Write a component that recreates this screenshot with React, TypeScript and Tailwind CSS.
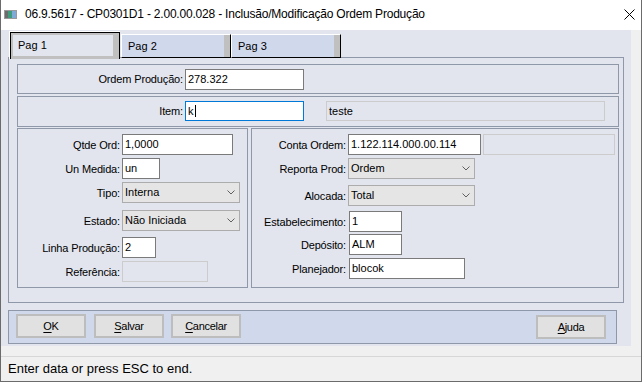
import React from "react";

const FONT = "font-['Liberation_Sans',Arial,sans-serif]";

function Label({ className, children }: { className: string; children: React.ReactNode }) {
  return (
    <div className={`shrink-0 text-right text-[11px] leading-[14px] tracking-[-0.15px] text-black ${className}`}>
      {children}
    </div>
  );
}

function Field({
  className,
  value,
  focused,
  h = "h-[21px]",
}: {
  className: string;
  value?: string;
  focused?: boolean;
  h?: string;
}) {
  return (
    <div
      className={`${h} shrink-0 border bg-white flex items-center pl-[2px] text-[11px] text-black ${
        focused ? "border-[#0078d7]" : "border-[#7a7a7a]"
      } ${className}`}
    >
      {value}
      {focused && <span className="ml-[1px] inline-block w-[1px] h-[12px] bg-black" />}
    </div>
  );
}

function Disabled({ className, value, h = "h-[21px]" }: { className: string; value?: string; h?: string }) {
  return (
    <div
      className={`${h} shrink-0 border border-[#cccccc] bg-[#e2e5ee] flex items-center pl-[2px] text-[11px] text-black ${className}`}
    >
      {value}
    </div>
  );
}

function Select({ className, value }: { className: string; value: string }) {
  return (
    <div
      className={`h-[21px] shrink-0 border border-[#acacac] bg-[#e5e5e5] flex items-center justify-between pl-[2px] pr-[4px] text-[11px] text-black ${className}`}
    >
      <span>{value}</span>
      <svg width="8" height="5" viewBox="0 0 8 5">
        <path d="M0.5 0.5 L4 4 L7.5 0.5" stroke="#606060" strokeWidth="1" fill="none" />
      </svg>
    </div>
  );
}

function Row({ className, children }: { className?: string; children: React.ReactNode }) {
  return <div className={`flex items-center ${className ?? ""}`}>{children}</div>;
}

function Btn({ first, rest, className }: { first: string; rest: string; className?: string }) {
  return (
    <div
      className={`w-[70px] h-[24px] shrink-0 border-2 border-[#bdbdbd] bg-[#e1e1e1] flex items-center justify-center text-[11px] tracking-[-0.3px] text-black ${className ?? ""}`}
    >
      <span>
        <span className="underline underline-offset-2">{first}</span>
        {rest}
      </span>
    </div>
  );
}

export default function App() {
  return (
    <div className={`${FONT} w-[642px] h-[382px] border-l border-r border-b border-[#6b6b6b] bg-[#f0f0f0] flex flex-col overflow-hidden`}>
      {/* Title bar */}
      <div className="h-[30px] bg-white flex items-center pl-[3px] pb-[2px] shrink-0">
        <svg width="13" height="9" viewBox="0 0 13 9" className="shrink-0">
          <rect x="0" y="0" width="13" height="9" fill="#d9d9d9" />
          <rect x="0.5" y="0.5" width="12" height="8" fill="none" stroke="#9a9a9a" />
          <rect x="1" y="1" width="3" height="7" fill="#6c6c6c" />
          <rect x="4" y="1" width="4" height="7" fill="#3f9c7c" />
          <rect x="8" y="1" width="4" height="7" fill="#7fa9d6" />
        </svg>
        <div className="ml-[8px] text-[12px] tracking-[-0.2px] text-black whitespace-nowrap">
          06.9.5617 - CP0301D1 - 2.00.00.028 - Inclusão/Modificação Ordem Produção
        </div>
        <div className="ml-auto mr-[6px]">
          <svg width="11" height="11" viewBox="0 0 11 11">
            <path d="M0.5 0.5 L10.5 10.5 M10.5 0.5 L0.5 10.5" stroke="#000" strokeWidth="1" />
          </svg>
        </div>
      </div>

      {/* Main */}
      <div className="flex shrink-0">
        <div className="w-[630px] h-[316px] bg-[#e2e5ee] pl-[7px] pt-[1px]">
          {/* Tabs */}
          <div className="relative z-10 flex items-start h-[26px] pl-[1px]">
            <div className="w-[111px] h-[28px] border-t border-l border-white shrink-0">
              <div className="h-full border-t border-l border-r border-black">
                <div className="h-full border-t-2 border-l-2 border-r-[6px] border-b-[3px] border-[#c0c0c0] bg-[#e2e5ee] flex items-center pl-[5px] pb-[1px] text-[11px] text-black">
                  Pag 1
                </div>
              </div>
            </div>
            <div className="ml-[1px] mt-[3px] w-[110px] h-[24px] border-t border-l border-white border-r border-b border-r-black border-b-black shrink-0">
              <div className="h-full border-r-[6px] border-[#c0c0c0] bg-[#d0d9ec] flex items-center pl-[6px] text-[11px] text-black">
                Pag 2
              </div>
            </div>
            <div className="ml-0 mt-[3px] w-[110px] h-[24px] border-t border-l border-white border-r border-b border-r-black border-b-black shrink-0">
              <div className="h-full border-r-[6px] border-[#c0c0c0] bg-[#d0d9ec] flex items-center pl-[6px] text-[11px] text-black">
                Pag 3
              </div>
            </div>
          </div>

          {/* Tab page */}
          <div className="w-[616px] h-[246px] border border-[#8e98a9] pl-[8px] pt-[6px]">
            {/* Ordem */}
            <div className="w-[602px] h-[30px] border border-[#8e98a9] flex items-center">
              <Label className="w-[165px]">Ordem Produção:</Label>
              <Field className="ml-[2px] w-[119px]" value="278.322" />
            </div>
            {/* Item */}
            <div className="mt-[2px] w-[602px] h-[31px] border border-[#8e98a9] flex items-start pt-[4px]">
              <Label className="w-[165px] mt-[3px]">Item:</Label>
              <Field className="ml-[2px] w-[119px]" h="h-[20px]" value="k" focused />
              <Disabled className="ml-[22px] w-[279px]" h="h-[20px]" value="teste" />
            </div>
            {/* Bottom panels */}
            <div className="mt-[1px] flex gap-[3px]">
              <div className="w-[231px] h-[160px] border border-[#8e98a9] pt-[5px]">
                <Row>
                  <Label className="w-[102px]">Qtde Ord:</Label>
                  <Field className="ml-[2px] w-[111px]" value="1,0000" />
                </Row>
                <Row className="mt-[3px]">
                  <Label className="w-[102px]">Un Medida:</Label>
                  <Field className="ml-[2px] w-[38px]" value="un" />
                </Row>
                <Row className="mt-[3px]">
                  <Label className="w-[102px]">Tipo:</Label>
                  <Select className="ml-[2px] w-[118px]" value="Interna" />
                </Row>
                <Row className="mt-[7px]">
                  <Label className="w-[102px]">Estado:</Label>
                  <Select className="ml-[2px] w-[118px]" value="Não Iniciada" />
                </Row>
                <Row className="mt-[6px]">
                  <Label className="w-[102px]">Linha Produção:</Label>
                  <Field className="ml-[2px] w-[34px]" value="2" />
                </Row>
                <Row className="mt-[3px]">
                  <Label className="w-[102px]">Referência:</Label>
                  <Disabled className="ml-[2px] w-[86px]" />
                </Row>
              </div>
              <div className="w-[368px] h-[160px] border border-[#8e98a9] pt-[5px]">
                <Row>
                  <Label className="w-[94px]">Conta Ordem:</Label>
                  <Field className="ml-[2px] w-[133px]" value="1.122.114.000.00.114" />
                  <Disabled className="ml-[2px] w-[132px]" />
                </Row>
                <Row className="mt-[3px]">
                  <Label className="w-[94px]">Reporta Prod:</Label>
                  <Select className="ml-[2px] w-[127px]" value="Ordem" />
                </Row>
                <Row className="mt-[6px]">
                  <Label className="w-[94px]">Alocada:</Label>
                  <Select className="ml-[2px] w-[127px]" value="Total" />
                </Row>
                <Row className="mt-[5px]">
                  <Label className="w-[94px]">Estabelecimento:</Label>
                  <Field className="ml-[3px] w-[53px]" value="1" />
                </Row>
                <Row className="mt-[2px]">
                  <Label className="w-[94px]">Depósito:</Label>
                  <Field className="ml-[3px] w-[53px]" value="ALM" />
                </Row>
                <Row className="mt-[3px]">
                  <Label className="w-[94px]">Planejador:</Label>
                  <Field className="ml-[3px] w-[116px]" value="blocok" />
                </Row>
              </div>
            </div>
          </div>

          {/* Button panel */}
          <div className="mt-[7px] w-[609px] h-[34px] border border-[#8e98a9] bg-[#d0d9ec] flex items-start pl-[7px] pt-[3px] pr-[10px]">
            <Btn first="O" rest="K" />
            <Btn className="ml-[8px]" first="S" rest="alvar" />
            <Btn className="ml-[7px]" first="C" rest="ancelar" />
            <Btn className="ml-auto mt-[1px]" first="A" rest="juda" />
          </div>
        </div>
        <div className="w-[10px] h-[316px] bg-[#f0f0f0]" />
      </div>

      <div className="h-[10px] shrink-0 bg-[#f0f0f0]" />
      <div className="h-[1px] shrink-0 bg-[#d7d7d7]" />
      <div className="h-[24px] shrink-0 bg-[#f0f0f0] flex items-center pl-[7px] text-[13px] text-black">
        Enter data or press ESC to end.
      </div>
    </div>
  );
}
